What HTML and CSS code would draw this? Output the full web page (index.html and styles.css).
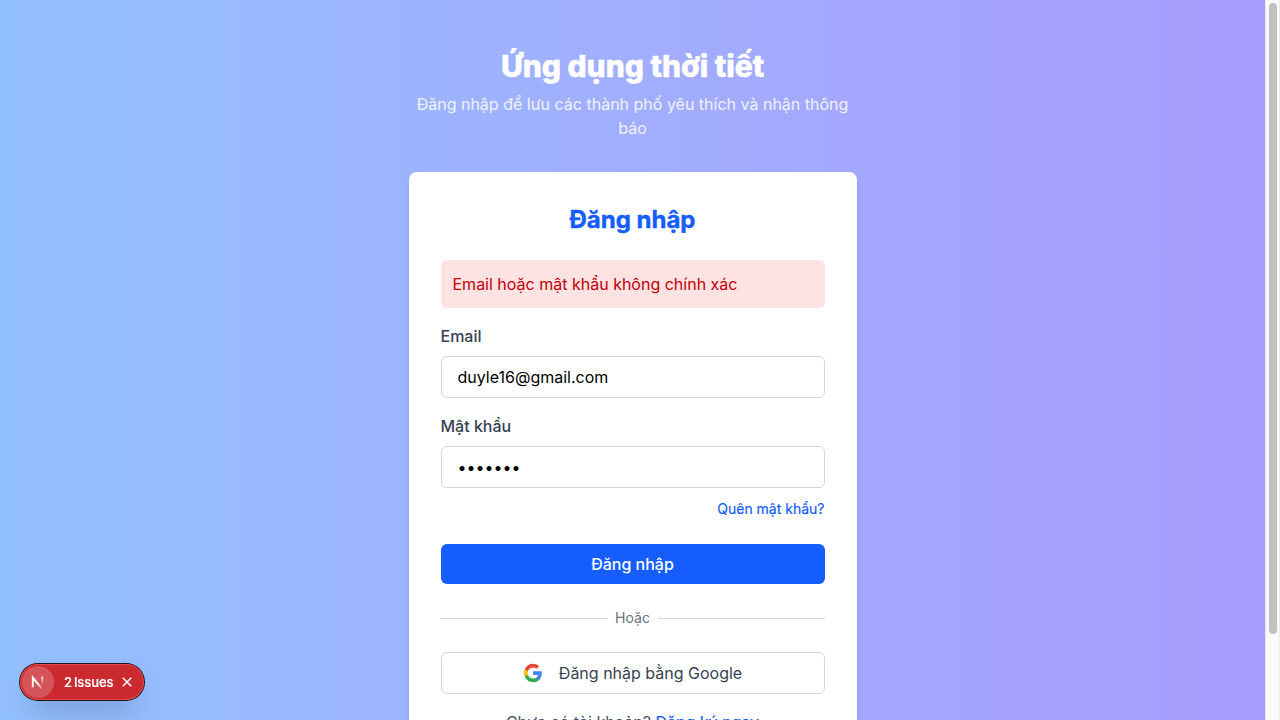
FILE: index.html
```html
<!DOCTYPE html>
<html lang="vi">
<head>
<meta charset="utf-8">
<title>Ứng dụng thời tiết</title>
<link rel="stylesheet" href="styles.css">
</head>
<body>
<div class="window">
  <main class="page">
    <div class="column">
      <h1 class="title">Ứng dụng thời tiết</h1>
      <p class="subtitle">Đăng nhập để lưu các thành phố yêu thích và nhận thông báo</p>
      <section class="card">
        <h2 class="heading">Đăng nhập</h2>
        <div class="alert">Email hoặc mật khẩu không chính xác</div>
        <form class="form">
          <div class="field">
            <label class="label" for="email">Email</label>
            <input class="input" id="email" type="email" value="duyle16@gmail.com">
          </div>
          <div class="field">
            <label class="label" for="password">Mật khẩu</label>
            <input class="input" id="password" type="password" value="1234567">
          </div>
          <a class="forgot" href="#">Quên mật khẩu?</a>
          <button class="submit" type="button">Đăng nhập</button>
        </form>
        <div class="divider"><span>Hoặc</span></div>
        <button class="google" type="button">
          <svg width="20" height="20" viewBox="0 0 24 24">
            <path fill="#4285F4" d="M22.56 12.25c0-.78-.07-1.53-.2-2.25H12v4.26h5.92c-.26 1.37-1.04 2.53-2.21 3.31v2.77h3.57c2.08-1.92 3.28-4.74 3.28-8.09z"/>
            <path fill="#34A853" d="M12 23c2.97 0 5.46-.98 7.28-2.66l-3.57-2.77c-.98.66-2.23 1.06-3.71 1.06-2.86 0-5.29-1.93-6.16-4.53H2.18v2.84C3.99 20.53 7.7 23 12 23z"/>
            <path fill="#FBBC05" d="M5.84 14.09c-.22-.66-.35-1.36-.35-2.09s.13-1.43.35-2.09V7.07H2.18C1.43 8.55 1 10.22 1 12s.43 3.45 1.18 4.93l3.66-2.84z"/>
            <path fill="#EA4335" d="M12 5.38c1.62 0 3.06.56 4.21 1.64l3.15-3.15C17.45 2.09 14.97 1 12 1 7.7 1 3.99 3.47 2.18 7.07l3.66 2.84c.87-2.6 3.3-4.53 6.16-4.53z"/>
          </svg>
          <span>Đăng nhập bằng Google</span>
        </button>
        <p class="register">Chưa có tài khoản? <a href="#">Đăng ký ngay</a></p>
      </section>
    </div>
  </main>
  <div class="scrollbar"><div class="thumb"></div></div>
  <div class="issues">
    <span class="mark">
      <svg width="14" height="14" viewBox="0 0 14 14" fill="none">
        <defs>
          <linearGradient id="diag" x1="8" y1="8" x2="12.5" y2="14" gradientUnits="userSpaceOnUse"><stop stop-color="#fff"/><stop offset="1" stop-color="#fff" stop-opacity="0"/></linearGradient>
          <linearGradient id="stem" x1="11" y1="1" x2="11" y2="10" gradientUnits="userSpaceOnUse"><stop stop-color="#fff"/><stop offset="1" stop-color="#fff" stop-opacity="0"/></linearGradient>
        </defs>
        <path d="M1.8 12.2V2.6L10.8 13.6" stroke="url(#diag)" stroke-width="1.9"/>
        <path d="M11.3 1.6V9.8" stroke="url(#stem)" stroke-width="1.7"/>
      </svg>
    </span>
    <span class="count">2</span><span class="issues-label">Issues</span>
    <svg class="close" width="10" height="10" viewBox="0 0 10 10"><path d="M.8 .8l8.4 8.4M9.2 .8L.8 9.2" stroke="#fff" stroke-width="1.5"/></svg>
  </div>
</div>
</body>
</html>
```
FILE: styles.css
```css
* { box-sizing: border-box; margin: 0; padding: 0; }
body { font-family: Inter, sans-serif; font-size: 16px; line-height: 24px; overflow: hidden; }
a { color: #155dfc; text-decoration: none; }
button, input { font: inherit; }

.window { display: flex; height: 720px; overflow: hidden; }
.page {
  flex: 1;
  display: flex;
  justify-content: center;
  align-items: flex-start;
  padding-top: 48px;
  height: 820px;
  background: linear-gradient(to right, #93c0ff, #a1aeff 50%, #a79bfb);
}
.column { width: 448px; text-align: center; }
.title { font-size: 30px; line-height: 36px; font-weight: 800; color: #fff; -webkit-text-stroke: .5px #fff; }
.subtitle { margin-top: 8px; color: rgba(255, 255, 255, .8); -webkit-text-stroke: .2px rgba(255, 255, 255, .5); }

.card {
  margin-top: 32px;
  padding: 32px;
  background: #fff;
  border-radius: 8px;
  box-shadow: 0 4px 6px -1px rgba(0, 0, 0, .1), 0 2px 4px -2px rgba(0, 0, 0, .1);
}
.heading { font-size: 24px; line-height: 32px; font-weight: 700; color: #155dfc; -webkit-text-stroke: .4px #155dfc; }
.alert {
  margin-top: 24px;
  padding: 12px;
  border-radius: 6px;
  background: #ffe2e2;
  color: #c10007;
  text-align: left;
}
.form { display: flex; flex-direction: column; gap: 16px; margin-top: 16px; }
.field { display: flex; flex-direction: column; gap: 8px; text-align: left; }
.label { font-weight: 500; color: #364153; }
.input {
  height: 42px;
  padding: 8px 16px;
  border: 1px solid #d1d5dc;
  border-radius: 6px;
  background: #fff;
  color: #000;
}
.forgot { align-self: flex-end; margin: -5px 0 9px; font-size: 14px; line-height: 20px; -webkit-text-stroke: .2px #155dfc; }
.submit {
  height: 40px;
  border: 0;
  border-radius: 6px;
  background: #155dfc;
  color: #fff;
  font-weight: 500;
}
.divider {
  display: flex;
  align-items: center;
  gap: 8px;
  margin: 24px 0;
  font-size: 14px;
  line-height: 20px;
  color: #6a7282;
}
.divider::before, .divider::after { content: ""; flex: 1; height: 1px; background: #d1d5dc; }
.google {
  display: flex;
  align-items: center;
  justify-content: center;
  gap: 16px;
  width: 100%;
  height: 42px;
  border: 1px solid #d1d5dc;
  border-radius: 6px;
  background: #fff;
  color: #364153;
}
.register { margin-top: 16px; color: #4a5565; }
.register a { -webkit-text-stroke: .2px #155dfc; }

.scrollbar { width: 15px; padding: 3px 3px 0 4px; background: #fafafa; border-left: 1px solid #e8e8e8; border-right: 1px solid #ededed; }
.thumb { width: 8px; margin-left: -1px; height: 631px; border-radius: 4px; background: #c1c1c1; }

.issues {
  position: fixed;
  left: 20px;
  top: 664px;
  display: flex;
  align-items: center;
  width: 124px;
  height: 36px;
  padding-left: 2px;
  border-radius: 18px;
  background: #ca2a30;
  color: #fff;
  font-size: 13px;
  font-weight: 500;
  letter-spacing: -.1px;
  -webkit-text-stroke: .2px #fff;
  box-shadow: 0 0 0 1px #171717, inset 0 0 0 1px #e5484d, 0 16px 32px -8px rgba(0, 0, 0, .24);
}
.mark {
  display: flex;
  align-items: center;
  justify-content: center;
  width: 32px;
  height: 32px;
  border-radius: 50%;
  background: rgba(255, 255, 255, .2);
}
.count { margin-left: 10px; }
.issues-label { margin-left: 2px; }
.close { margin-left: 9px; }
```
